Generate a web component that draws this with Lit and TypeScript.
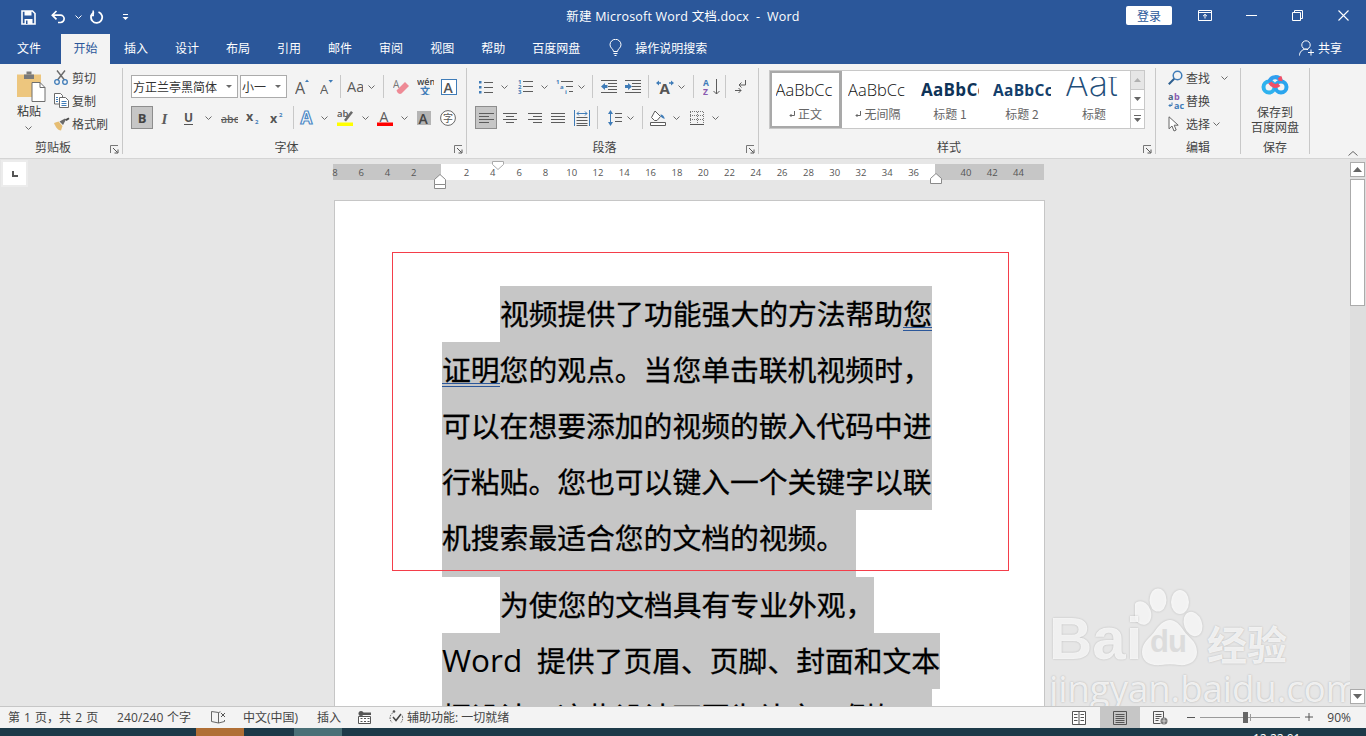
import { LitElement, html, svg, css } from "lit";
import { customElement } from "lit/decorators.js";

const G = "#5c5c5c";
const B = "#3f7cb8";
const P = "#8a5bb0";

const cell = (w: number, c: unknown) => html`<span class="c" style="width:${w}px">${c}</span>`;
const chev = (color = "#6a6a6a") => html`<svg width="7" height="4" viewBox="0 0 7 4"><path d="M.5.5l3 3 3-3" fill="none" stroke=${color}/></svg>`;
const sep = () => html`<span class="vsep"></span>`;

const lines = (rows: number[][], w: number, h: number, c = G) => html`<svg width=${w} height=${h} viewBox="0 0 ${w} ${h}">${rows.map(([a, b, y]) => svg`<path d="M${a} ${y + 0.5}H${b}" stroke=${c} fill="none"/>`)}</svg>`;

const icons = {
  save: html`<svg width="15" height="15" viewBox="0 0 15 15"><path d="M1 1h10.5L14 3.5V14H1z" fill="none" stroke="#fff" stroke-width="1.6"/><path d="M3.5 1h7v4.5h-7zM3.5 9h8v5h-8z" fill="#fff"/><path d="M5 10.5h1.5V14H5z" fill="#2b579a"/></svg>`,
  undo: html`<svg width="15" height="14" viewBox="0 0 15 14"><path d="M1.5 5.2H9.5a3.6 3.6 0 0 1 0 7.3H7" fill="none" stroke="#fff" stroke-width="1.7"/><path d="M5.5 1L1.3 5.2l4.2 4.2" fill="none" stroke="#fff" stroke-width="1.7"/></svg>`,
  redo: html`<svg width="14" height="14" viewBox="0 0 14 14"><path d="M8.5 2A5.6 5.6 0 1 1 4 2.3" fill="none" stroke="#fff" stroke-width="1.8"/><path d="M3.2 .5v5h-2.7" fill="none" stroke="#fff" stroke-width="1.5"/></svg>`,
  qat: html`<svg width="7" height="7" viewBox="0 0 7 7"><path d="M1 .5h5" stroke="#fff"/><path d="M.5 3h6L3.500 6z" fill="#fff"/></svg>`,
  ribbonDisp: html`<svg width="14" height="11" viewBox="0 0 14 11"><path d="M.5.5h13v10H.5zM.5 2.500h13" fill="none" stroke="#fff"/><path d="M7 8.500V4.500M5 6.200L7 4.300l2 1.900" fill="none" stroke="#fff"/></svg>`,
  min: html`<svg width="11" height="1" viewBox="0 0 11 1"><path d="M0 .5h11" stroke="#fff"/></svg>`,
  restore: html`<svg width="11" height="11" viewBox="0 0 11 11"><path d="M.5 2.500h8v8h-8zM2.500 2.500v-2h8v8h-2" fill="none" stroke="#fff"/></svg>`,
  close: html`<svg width="11" height="11" viewBox="0 0 11 11"><path d="M.5.5l10 10M10.500.5l-10 10" stroke="#fff" stroke-width="1.1"/></svg>`,
  bulb: html`<svg width="13" height="17" viewBox="0 0 13 17"><path d="M4.500 12.500C4.500 10 1 9 1 5.800a5.500 5.500 0 0 1 11 0C12 9 8.500 10 8.500 12.500z" fill="none" stroke="#fff"/><path d="M4.500 14.500h4M5.500 16.500h2" stroke="#fff"/></svg>`,
  person: html`<svg width="16" height="16" viewBox="0 0 16 16"><circle cx="7" cy="5" r="4.200" fill="none" stroke="#fff"/><path d="M.5 15.500c0-3.500 2.500-6 6-6.300 1 0 1.800.2 2.500.5" fill="none" stroke="#fff"/><path d="M12 9.500v6M9 12.500h6" stroke="#fff"/></svg>`,
  paste: html`<svg width="29" height="31" viewBox="0 0 29 31"><path d="M0 3.500h24V26H0z" fill="#edc67e"/><path d="M7 3.500h10V8H7z" fill="#7a7a7a"/><path d="M9.500.5h5v3h-5z" fill="#7a7a7a"/><path d="M15 11.500h8l5 5v14H15z" fill="#fff" stroke="#6e6e6e"/><path d="M23 11.500v5h5" fill="none" stroke="#6e6e6e"/></svg>`,
  scissors: html`<svg width="14" height="15" viewBox="0 0 14 15"><path d="M3 .5l7.500 9.500M11 .5L3.500 10" stroke="#6a6a6a" stroke-width="1.400" fill="none"/><circle cx="3" cy="12" r="2.300" fill="none" stroke="#3f7cb8" stroke-width="1.300"/><circle cx="11" cy="12" r="2.300" fill="none" stroke="#3f7cb8" stroke-width="1.300"/></svg>`,
  copy: html`<svg width="15" height="15" viewBox="0 0 15 15"><path d="M.5.5h6l2 2V11H.5z" fill="#fff" stroke="#6a6a6a"/><path d="M5.500 4.500h6l3 3v7h-9z" fill="#fff" stroke="#6a6a6a"/><path d="M2 4.500h2M2 6.500h2M2 8.500h2" stroke="#3f7cb8"/><path d="M7.500 8.500h5M7.500 10.500h5M7.500 12.500h5" stroke="#3f7cb8"/></svg>`,
  painter: html`<svg width="16" height="14" viewBox="0 0 16 14"><path d="M0 6l4.500-1.500 4 4.500L7 13.500C4 13.500 1.500 10 0 6z" fill="#e6bd72"/><path d="M5.500 4.500l5.500-3 1 1-3 5.500z" fill="#6a6a6a"/><path d="M11 2.500l3.500-2 1 1.500-3 2z" fill="#4a4a4a"/></svg>`,
  launcher: html`<svg width="9" height="9" viewBox="0 0 9 9"><path d="M.5 8V.5H8" fill="none" stroke="#777"/><path d="M3 3l4.500 4.500M8 4.500V8H4.500" fill="none" stroke="#555"/></svg>`,
  bullets: html`<svg width="14" height="14" viewBox="0 0 14 14"><path d="M0 1h2.500v2.500H0zM0 6h2.500v2.500H0zM0 11h2.500v2.500H0z" fill=${B}/><path d="M5 2.500h9M5 7.500h9M5 12.500h9" stroke=${G}/></svg>`,
  numbered: html`<svg width="15" height="15" viewBox="0 0 15 15"><text x="0" y="5" font-size="6" fill=${B} font-weight="700">1</text><text x="0" y="10" font-size="6" fill=${B} font-weight="700">2</text><text x="0" y="15" font-size="6" fill=${B} font-weight="700">3</text><path d="M5 2.500h10M5 7.500h10M5 12.500h10" stroke=${G}/></svg>`,
  multi: html`<svg width="17" height="15" viewBox="0 0 17 15"><text x="0" y="5" font-size="6" fill=${B} font-weight="700">1</text><text x="4" y="10" font-size="6" fill=${B} font-weight="700">a</text><text x="9" y="15" font-size="6" fill=${B} font-weight="700">i</text><path d="M5 2.500h12M10 7.500h7M13 12.500h4" stroke=${G}/></svg>`,
  outdent: html`<svg width="16" height="13" viewBox="0 0 16 13"><path d="M0 .5h16M7 3.500h9M7 6.500h9M7 9.500h9M0 12.500h16" stroke=${G}/><path d="M0 6.500l4-3.500v2h2.500v3H4v2z" fill=${B}/></svg>`,
  indent: html`<svg width="16" height="13" viewBox="0 0 16 13"><path d="M0 .5h16M7 3.500h9M7 6.500h9M7 9.500h9M0 12.500h16" stroke=${G}/><path d="M7 6.500L3 3v2H0v3h3v2z" fill=${B}/></svg>`,
  layout: html`<svg width="18" height="14" viewBox="0 0 18 14"><text x="3.500" y="14" font-size="15" font-weight="700" fill="#555">A</text><path d="M0 3l3-2.500v1.800h2v1.400H3v1.800zM18 3l-3-2.500v1.800h-2v1.400h2v1.800z" fill=${B}/></svg>`,
  sort: html`<svg width="18" height="16" viewBox="0 0 18 16"><text x="0" y="7" font-size="8.500" font-weight="700" fill=${B}>A</text><text x="0" y="16" font-size="8.500" font-weight="700" fill=${P}>Z</text><path d="M13.500 0v15M10.500 12l3 3 3-3" fill="none" stroke=${G}/></svg>`,
  returnIc: html`<svg width="11" height="13" viewBox="0 0 11 13"><path d="M10.500 0v5H4M6.500 2.500L4 5l2.500 2.500" fill="none" stroke=${G}/><path d="M0 10.500h6M3.500 8L6 10.500 3.500 13" fill="none" stroke=${G}/></svg>`,
  alignL: lines([[0,15,0],[0,10,3],[0,15,6],[0,10,9]], 15, 10),
  alignC: lines([[0,14,0],[3,11,3],[0,14,6],[3,11,9]], 14, 10),
  alignR: lines([[0,14,0],[5,14,3],[0,14,6],[5,14,9]], 14, 10),
  alignJ: lines([[0,14,0],[0,14,3],[0,14,6],[0,14,9]], 14, 10),
  distrib: html`<svg width="16" height="16" viewBox="0 0 16 16"><path d="M.5 0v16M15.500 0v16" stroke=${B}/><path d="M3 3.500h10M5 1.500L3 3.500l2 2M11 1.500l2 2-2 2" fill="none" stroke=${B}/><path d="M2.500 7.500h11M2.500 10.500h11M2.500 13.500h11M2.500 15.500h11" stroke=${G}/></svg>`,
  spacing: html`<svg width="14" height="16" viewBox="0 0 14 16"><path d="M2.500 2v12" stroke=${B}/><path d="M0 4l2.500-4L5 4zM0 12l2.500 4L5 12z" fill=${B}/><path d="M7 3.500h7M7 7.500h7M7 11.500h7" stroke=${G}/></svg>`,
  shading: html`<svg width="16" height="16" viewBox="0 0 16 16"><path d="M5 1l5.500 5.500L7 10.500H4.500L1.500 7.500z" fill="#fff" stroke=${G}/><path d="M10.500 4.500c2 0 4 1.800 4.200 4.500-1.500-.5-3-1.300-4-2.500z" fill=${B}/><path d="M.5 12.500h15v3H.5z" fill="#fff" stroke=${G}/></svg>`,
  border: html`<svg width="14" height="14" viewBox="0 0 14 14"><path d="M0 .5h14M0 4.500h14M0 8.500h14M.5 1v11M7.500 1v11M13.500 1v11" stroke="#777" stroke-dasharray="1 1" fill="none"/><path d="M0 13.500h14" stroke="#555"/></svg>`,
  find: html`<svg width="15" height="15" viewBox="0 0 15 15"><circle cx="9.500" cy="5.500" r="4.300" fill="none" stroke=${B} stroke-width="1.500"/><path d="M6.200 8.800L.8 14.200" stroke="#2e5f90" stroke-width="2"/></svg>`,
  replace: html`<svg width="17" height="16" viewBox="0 0 17 16"><text x="0" y="7" font-size="9" font-weight="700" fill="#46617d">a</text><text x="6" y="7" font-size="9" font-weight="700" fill=${P}>b</text><text x="6" y="16" font-size="9" font-weight="700" fill=${B}>ac</text><path d="M4 9.500v3H1M2.500 11L1 12.500 2.500 14" fill="none" stroke=${B}/></svg>`,
  select: html`<svg width="12" height="16" viewBox="0 0 12 16"><path d="M1 .8v12l3-2.800 2 5 2.200-1-2-4.800h4z" fill="#fff" stroke="#666"/></svg>`,
  baidupan: html`<svg width="28" height="24" viewBox="0 0 28 24"><circle cx="8" cy="15" r="5.500" fill="none" stroke="#2eb2ee" stroke-width="4"/><circle cx="20" cy="15" r="5.500" fill="none" stroke="#2aa5ee" stroke-width="4"/><path d="M8.500 10A6 6 0 0 1 20 9" fill="none" stroke="#2f9ff0" stroke-width="4"/><path d="M9 10.500c2 3 6 5 9 2" fill="none" stroke="#f05068" stroke-width="4"/><path d="M19.500 9a5.800 5.800 0 0 0-1-4" fill="none" stroke="#f05068" stroke-width="4"/></svg>`,
  retMark: html`<svg width="6" height="6" viewBox="0 0 6 6"><path d="M5.500 0v4.500H1M2.500 3L1 4.500 2.500 6" fill="none" stroke="#666"/></svg>`,
  book: html`<svg width="15" height="13" viewBox="0 0 15 13"><path d="M7.500 1.500L.5.500v10l7 1.500zM7.500 1.500l2-.7M7.500 12l6-1.500V9" fill="none" stroke="#666"/><path d="M10 2l4 4M14 2l-4 4" stroke="#555"/></svg>`,
  macro: html`<svg width="13" height="13" viewBox="0 0 13 13"><circle cx="3" cy="2.500" r="2.500" fill="#555"/><path d="M5 1.500h8V4H5z" fill="#555"/><path d="M.5 5.500h12v7H.5z" fill="#fff" stroke="#555"/><path d="M2.500 7.500h2M6 7.500h2M9.500 7.500h2M2.500 10.500h2M6 10.500h2M9.500 10.500h2" stroke="#555"/></svg>`,
  access: html`<svg width="15" height="15" viewBox="0 0 15 15"><path d="M3.500 3A6.300 6.300 0 0 0 3 12.500M12 12.500A6.300 6.300 0 0 0 12.800 5" fill="none" stroke="#555" stroke-dasharray="1.500 1"/><circle cx="5" cy="1.500" r="1.300" fill="#555"/><path d="M4 7l3 3.500L12 4" fill="none" stroke="#444" stroke-width="1.500"/></svg>`,
  readView: html`<svg width="14" height="14" viewBox="0 0 14 14"><path d="M.5.5h13v13H.5zM7 .5v13" fill="#fff" stroke="#555"/><path d="M2 3.500h3.500M2 6.500h3.500M2 9.500h3.500M8.500 3.500H12M8.500 6.500H12M8.500 9.500H12" stroke="#555"/></svg>`,
  printView: html`<svg width="14" height="14" viewBox="0 0 14 14"><path d="M.5.500h13v13H.5z" fill="none" stroke="#555"/><path d="M2.500 3.500h9M2.500 5.500h9M2.500 7.500h9M2.500 9.500h9M2.500 11.500h9" stroke="#555"/></svg>`,
  webView: html`<svg width="15" height="14" viewBox="0 0 15 14"><path d="M.5.500h10v8M.5.500v12h7" fill="none" stroke="#555"/><path d="M2.500 3.500h6M2.500 5.500h6M2.500 7.500h4M2.500 9.500h3" stroke="#555"/><circle cx="11" cy="10" r="3.500" fill="#777"/><path d="M8.500 10h5M11 7v6" stroke="#fff" stroke-width=".6"/></svg>`,
};

const T = (t: string, x: number, y: number, fs: number, o: Record<string, string> = {}) => svg`<text x=${x} y=${y} font-size=${fs} fill=${o.fill ?? "#5a5a5a"} font-weight=${o.w ?? "400"} font-style=${o.s ?? "normal"}>${t}</text>`;

const txt = {
  growA: html`<svg width="15" height="15" viewBox="0 0 15 15">${T("A", 0, 15, 16)}<path d="M10 3l2-2.500L14 3z" fill=${B}/></svg>`,
  shrinkA: html`<svg width="13" height="14" viewBox="0 0 13 14">${T("A", 0, 14, 13)}<path d="M8.500 0h4.500L10.700 2.800z" fill=${B}/></svg>`,
  aa: html`<svg width="16" height="13" viewBox="0 0 16 13">${T("Aa", 0, 12, 14.500)}</svg>`,
  eraser: html`<svg width="16" height="16" viewBox="0 0 16 16">${T("A", 0, 9, 10, { fill: "#777" })}<path d="M12 3l4 4-7.500 7.500c-1.500.8-3 .3-4-1l-1-2z" fill="#ee8a95"/></svg>`,
  wen: html`<svg width="17" height="17" viewBox="0 0 17 17">${T("wén", 0, 7, 9, { fill: "#444", w: "600" })}<text x="3" y="17" font-size="10" fill=${B} font-weight="700">文</text></svg>`,
  abox: html`<svg width="16" height="16" viewBox="0 0 16 16"><rect x=".5" y=".5" width="15" height="15" fill="#fff" stroke=${B}/>${T("A", 2.600, 13.500, 14, { fill: "#555", w: "600" })}</svg>`,
  I: html`<svg width="10" height="14" viewBox="0 0 10 14"><text class="serif" x="1.500" y="12.500" font-size="15" fill="#5c5c5c" font-style="italic" font-weight="700">I</text></svg>`,
  U: html`<svg width="10" height="14" viewBox="0 0 10 14">${T("U", 0, 11, 12, { w: "700", fill: "#555" })}<path d="M0 13.500h9" stroke="#555"/></svg>`,
  abc: html`<svg width="17" height="12" viewBox="0 0 17 12">${T("abc", 0, 11, 10.500, { w: "600", fill: "#666" })}<path d="M0 7.500h17" stroke="#555"/></svg>`,
  x2: html`<svg width="15" height="12" viewBox="0 0 15 12">${T("x", 0, 9, 12.500, { w: "700", fill: "#555" })}${T("2", 9, 12, 6, { fill: B, w: "700" })}</svg>`,
  xs: html`<svg width="15" height="12" viewBox="0 0 15 12">${T("x", 0, 11, 12.500, { w: "700", fill: "#555" })}${T("2", 9, 5, 6, { fill: B, w: "700" })}</svg>`,
  glow: html`<svg width="18" height="17" viewBox="0 0 18 17"><text x="1.500" y="15" font-size="17" font-weight="700" fill="#fff" stroke="#4f8ac6" stroke-width="1.200">A</text></svg>`,
  ab: html`<svg width="17" height="17" viewBox="0 0 17 17">${T("ab", 0, 8, 9.500, { w: "600", fill: "#555" })}<path d="M7 11l7-9 2 1.500-7 9z" fill="#6a6a6a"/><path d="M0 13.500h16V17H0z" fill="#ff0"/></svg>`,
  aRed: html`<svg width="16" height="17" viewBox="0 0 16 17">${T("A", 2.500, 13, 14, { w: "400" })}<path d="M0 13.500h16V17H0z" fill="#f00"/></svg>`,
  aGray: html`<svg width="14" height="14" viewBox="0 0 14 14"><rect width="14" height="14" fill="#b4b4b4"/>${T("A", 1.500, 12.500, 14, { fill: "#444", w: "600" })}</svg>`,
  zi: html`<svg width="16" height="16" viewBox="0 0 16 16"><circle cx="8" cy="8" r="7.400" fill="#fff" stroke="#666"/><text x="3" y="12" font-size="10" fill="#555">字</text></svg>`,
};

const paraRow1 = [[21, icons.bullets],[16, chev()],[26, icons.numbered],[13, chev()],[26, icons.multi],[8, chev()],[14, sep()],[20, icons.outdent],[28, icons.indent],[3, sep()],[2, ""],[26, icons.layout],[6, chev()],[18, sep()],[20, icons.sort],[6, sep()],[24, icons.returnIc]] as [number, unknown][];
const paraRow2 = [[26, icons.alignC],[23, icons.alignR],[24, icons.alignJ],[24, icons.distrib],[6, sep()],[4, ""],[22, icons.spacing],[8, chev()],[16, sep()],[16, icons.shading],[20, chev()],[22, icons.border],[14, chev()]] as [number, unknown][];
const fontRow1 = [[26, txt.growA],[22, txt.shrinkA],[7, sep()],[21, txt.aa],[13, chev()],[11, sep()],[24, txt.eraser],[24, txt.wen],[24, txt.abox]] as [number, unknown][];
const fontRow2 = [[24, txt.I],[24, txt.U],[15, chev()],[26, txt.abc],[23, txt.x2],[24, txt.xs],[8, sep()],[22, txt.glow],[11, chev()],[30, txt.ab],[10, chev()],[30, txt.aRed],[8, chev()],[32, txt.aGray],[16, txt.zi]] as [number, unknown][];

const styles = [
  { s: "AaBbCc", l: "正文", mark: true, cls: "s-normal", picked: true },
  { s: "AaBbCc", l: "无间隔", mark: true, cls: "s-normal" },
  { s: "AaBbCc", l: "标题 1", cls: "s-h1" },
  { s: "AaBbCc", l: "标题 2", cls: "s-h2" },
  { s: "Aat", l: "标题", cls: "s-title" },
];

const rulerLeft = [8, 6, 4, 2];
const rulerRight = Array.from({ length: 18 }, (_, i) => (i + 1) * 2);
const rulerEnd = [40, 42, 44];
const UI = css`"Open Sans", "Noto Sans CJK SC", sans-serif`;

@customElement("app-root")
export class AppRoot extends LitElement {
  static styles = css`
    :host { display: block; width: 1366px; height: 736px; overflow: hidden; position: relative; background: #e6e6e6; font-family: "Noto Sans CJK SC", sans-serif; font-size: 12px; color: #444; }
    svg { display: block; flex: none; }
    svg text { font-family: ${UI}; }
    svg text.serif { font-family: "Liberation Serif", serif; }
    .app { display: flex; flex-direction: column; height: 736px; }

    .titlebar { height: 34px; background: #2b579a; display: grid; grid-template-columns: 1fr auto 1fr; align-items: center; color: #fff; }
    .qat { display: flex; align-items: center; }
    .qat .c { height: 20px; }
    .title { font-family: ${UI}; font-size: 12.5px; letter-spacing: .2px; white-space: pre; margin-top: -4px; }
    .winctl { display: flex; justify-content: flex-end; align-items: center; }
    .login { width: 46px; height: 19px; background: #fff; color: #2b579a; border-radius: 2px; display: flex; align-items: center; justify-content: center; margin-right: 10px; margin-top: -3px; }
    .wb { width: 46px; height: 30px; display: flex; align-items: center; justify-content: center; margin-top: -3px; }

    .tabs { height: 30px; background: #2b579a; display: flex; color: #fff; padding-left: 17px; box-sizing: border-box; }
    .tab { line-height: 27px; margin-right: 27px; white-space: nowrap; }
    .tab.first { margin-right: 20px; }
    .tab.active { background: #f3f3f3; color: #2b579a; padding: 0 12.5px; margin-right: 14px; margin-top: 0; }
    .tab.pan { margin-right: 29px; }
    .tellme { display: flex; align-items: center; gap: 13px; height: 27px; }
    .share { margin-left: auto; margin-right: 24px; display: flex; align-items: center; gap: 3px; height: 27px; }

    .ribbon { height: 94px; background: #f3f3f3; display: flex; border-bottom: 1px solid #d4d4d4; box-sizing: content-box; }
    .group { margin-top: 4px; height: 86px; border-right: 1px solid #c8c8c8; display: flex; flex-direction: column; box-sizing: border-box; position: relative; flex: none; }
    .gbody { height: 70px; flex: none; box-sizing: border-box; }
    .gfoot { display: grid; grid-template-columns: 1fr 16px; height: 16px; align-items: center; text-align: center; }
    .gfoot.plain { grid-template-columns: 1fr; }
    .gfoot .launch { justify-self: center; margin-top: 4px; }
    .gfoot span { color: #444; line-height: 18px; }

    .c { display: inline-flex; align-items: center; justify-content: center; height: 23px; flex: none; }
    .vsep { width: 1px; height: 23px; background: #c8c8c8; display: block; }
    .row { display: flex; align-items: center; height: 23px; }

    .clip { width: 123px; }
    .clipbody { display: flex; height: 70px; }
    .pastecol { width: 58px; padding-left: 17px; padding-top: 3px; box-sizing: border-box; display: flex; flex-direction: column; align-items: flex-start; }
    .pastecol .pl { width: 24px; line-height: 16px; margin-top: 1px; color: #333; white-space: nowrap; }
    .pastecol .ch { margin: 7px 0 0 8px; }
    .cliplist { display: flex; flex-direction: column; margin-top: -2px; margin-left: -4px; }
    .cl { display: flex; height: 23px; align-items: center; }
    .cl .ci { width: 18px; display: flex; justify-content: flex-start; }

    .font { width: 344px; }
    .fbody { padding: 7px 0 0 8px; display: flex; flex-direction: column; gap: 8px; }
    .combo { border: 1px solid #ababab; background: #fff; height: 23px; box-sizing: border-box; display: flex; align-items: center; padding: 0 4px 0 1px; color: #333; flex: none; margin-right: 2px; }
    .combo .v { flex: 1; white-space: nowrap; }
    .combo .ar { width: 0; height: 0; border: 3px solid transparent; border-top: 3.500px solid #6a6a6a; border-bottom: 0; margin-right: 1px; }
    .cb-font { width: 107px; }
    .cb-size { width: 47px; }
    .press { width: 22px; height: 23px; box-sizing: border-box; background: #c6c6c6; border: 1px solid #8d8d8d; display: flex; align-items: center; justify-content: center; flex: none; }
    .press b { font: 700 13px "Open Sans", sans-serif; color: #444; }

    .para { width: 292px; }

    .stylesg { width: 397px; }
    .gallery { display: flex; margin: 2px 0 0 10px; height: 59px; width: 377px; }
    .gitems { display: flex; width: 361px; height: 59px; box-sizing: border-box; border: 1px solid #c8c8c8; border-right: 0; background: #fff; overflow: hidden; }
    .si { width: 72px; height: 57px; flex: none; box-sizing: border-box; display: flex; flex-direction: column; align-items: center; overflow: hidden; padding-top: 6px; }
    .si.picked { margin: -1px 0 -1px -1px; height: 59px; width: 73px; border: 3px solid #a9a9a9; box-shadow: inset 0 0 0 1px #fff; padding-top: 4px; }
    .sample { height: 26px; line-height: 26px; width: 60px; overflow: hidden; white-space: nowrap; font-family: "Open Sans", sans-serif; color: #000; }
    .s-normal { font-size: 16.500px; font-weight: 300; color: #111; }
    .s-h1 { font-size: 17px; font-weight: 700; color: #0e3358; width: 58px; letter-spacing: .3px; }
    .s-h2 { font-size: 15.500px; font-weight: 700; color: #143f6c; width: 58px; letter-spacing: .3px; }
    .s-title { font: 200 36px/13px "Inter", sans-serif; color: #1f4e79; width: 58px; }
    .sl { color: #666; display: flex; align-items: center; gap: 3px; line-height: 16px; margin-top: 3px; white-space: nowrap; }
    .gbtn { display: flex; flex-direction: column; width: 15px; height: 59px; flex: none; }
    .gbtn span { flex: 1; box-sizing: border-box; background: #fff; border: 1px solid #c8c8c8; border-top: 0; display: flex; align-items: center; justify-content: center; }
    .gbtn span:first-child { background: #e6e6e6; border-top: 1px solid #c8c8c8; }

    .edit { width: 85px; }
    .elist { display: flex; flex-direction: column; }
    .elist .ei:first-child { margin-top: -2px; }
    .ei { display: flex; align-items: center; height: 23px; padding-left: 12px; white-space: nowrap; }
    .ei .ii { width: 18px; display: flex; justify-content: flex-start; }
    .ei .ch { margin-left: 11px; }
    .ei .ch2 { margin-left: 3px; }

    .saveg { width: 69px; }
    .savebody { display: flex; flex-direction: column; align-items: center; padding-top: 4px; line-height: 15px; color: #444; }
    .savebody .tx { text-align: center; margin-top: 8px; white-space: nowrap; }
    .collapse { flex: 1; display: flex; align-items: flex-end; justify-content: flex-end; padding: 0 8px 2px 0; }

    .main { flex: 1; display: flex; min-height: 0; background: #e6e6e6; }
    .docview { flex: 1; min-width: 0; display: flex; flex-direction: column; overflow: hidden; position: relative; }
    .rulerrow { flex: none; height: 41px; display: flex; align-items: flex-start; }
    .corner { width: 23px; height: 23px; margin: 3px 0 0 3px; background: #fff; box-shadow: 0 0 0 2px #ececec; flex: none; display: flex; align-items: center; justify-content: center; }
    .ruler { position: relative; margin: 5px 0 0 307px; width: 711px; height: 16px; background: #c6c6c6; }
    .rwhite { position: absolute; left: 108px; top: 0; width: 494px; height: 16px; background: #fff; }
    .rn { position: absolute; top: 0; width: 16px; margin-left: -8px; text-align: center; font: 9.500px/17px "Open Sans", sans-serif; color: #555; }
    .mk { position: absolute; display: block; }
    .mk-hang { left: 101px; top: 10px; }
    .mk-first { left: 159px; top: -3px; }
    .mk-right { left: 597px; top: 9px; }

    .page { flex: none; margin-left: 334px; width: 711px; box-sizing: border-box; background: #fff; border: 1px solid #c6c6c6; border-bottom: 0; padding: 85px 0 0 107px; height: 520px; font-size: 28.800px; color: #000; position: relative; -webkit-text-stroke: .3px #000; }
    .ln { display: block; height: 56px; line-height: 54px; white-space: nowrap; }
    .ln.ind { padding-left: 58px; }
    .ln.end { height: 67px; }
    .sel { display: inline-block; background: #c6c6c6; height: 100%; vertical-align: top; position: relative; }
    .sel.pm { padding-right: 11px; }
    .dbl { position: relative; }
    .dbl::after { content: ""; position: absolute; left: 0; right: 0; bottom: 2px; height: 4px; box-sizing: border-box; border-top: 1px solid #2b579a; border-bottom: 1px solid #2b579a; }
    .wd { font-family: "Open Sans", sans-serif; display: inline-block; width: 95px; font-size: 31.500px; line-height: 54px; vertical-align: top; -webkit-text-stroke: 0; }
    .redbox { position: absolute; left: 57px; top: 51px; width: 617px; height: 319px; box-sizing: border-box; border: 1px solid #f43e4a; pointer-events: none; }

    .watermark { position: absolute; left: 1047px; top: 428px; width: 250px; height: 120px; color: rgba(255, 255, 255, .8); pointer-events: none; }
    .wm-paw { position: absolute; left: 88px; top: 0; filter: drop-shadow(0 0 1px rgba(0, 0, 0, .22)); }
    .wm-bai { position: absolute; left: 2px; top: 21px; font: 700 60px/62px "Liberation Sans", sans-serif; text-shadow: 0 0 2px rgba(0, 0, 0, .22); }
    .wm-du { position: absolute; left: 103px; top: 37px; font: 700 31px/36px "Liberation Sans", sans-serif; color: #dcdcdc; letter-spacing: -1px; }
    .wm-jy { position: absolute; left: 160px; top: 31px; font: 700 40px/50px "Noto Sans CJK SC", sans-serif; text-shadow: 0 0 2px rgba(0, 0, 0, .22); white-space: nowrap; }
    .wm-url { position: absolute; left: 2px; top: 81px; font: 400 36.500px/40px "Open Sans", sans-serif; text-shadow: 0 0 2px rgba(0, 0, 0, .25); white-space: nowrap; }

    .vscroll { width: 16px; flex: none; display: flex; flex-direction: column; background: #dedede; padding-top: 3px; box-sizing: border-box; }
    .sb { width: 15px; height: 15px; box-sizing: border-box; border: 1px solid #ababab; background: #fff; display: flex; align-items: center; justify-content: center; flex: none; }
    .thumb { width: 15px; height: 127px; box-sizing: border-box; margin-top: 2px; border: 1px solid #ababab; background: #fff; flex: none; }
    .track { flex: 1; }
    .vscroll .sb:last-child { margin-bottom: 2px; }

    .status { height: 22px; background: #f3f3f3; border-top: 1px solid #c6c6c6; box-sizing: border-box; display: flex; align-items: center; flex: none; color: #444; white-space: nowrap; padding-left: 8px; font-family: ${UI}; }
    .st { display: flex; align-items: center; height: 21px; flex: none; line-height: 19px; padding-bottom: 1px; box-sizing: border-box; }
    .pg { width: 109px; word-spacing: 1px; white-space: pre; }
    .cnt { width: 94px; white-space: pre; letter-spacing: .15px; }
    .bk { width: 32px; }
    .zh { width: 74px; }
    .ins { width: 41px; }
    .mc { width: 31px; }
    .ac { width: 18px; }
    .vw { height: 21px; display: flex; align-items: center; justify-content: center; flex: none; }
    .vw.rd { margin-left: auto; width: 16px; }
    .vw.on { background: #c6c6c6; margin-left: 13px; width: 40px; }
    .vw.wb2 { margin-left: 13px; width: 15px; }
    .zm-minus { margin-left: 19px; }
    .zm-pct { margin: 0 15px 0 14px; }
    .zoombar { width: 100px; height: 1px; background: #9a9a9a; position: relative; flex: none; margin: 0 5px; }
    .zoombar::before { content: ""; position: absolute; left: 50px; top: -3px; width: 1px; height: 7px; background: #9a9a9a; }
    .zoombar i { position: absolute; left: 43px; top: -5px; width: 5px; height: 11px; background: #666; }

    .task { height: 8px; flex: none; background: #1d3a49; display: flex; overflow: hidden; }
    .task .o { width: 48px; margin-left: 196px; background: #b06f35; flex: none; }
    .task .g { width: 48px; margin-left: 50px; background: #4a7077; flex: none; }
    .task .clock { margin-left: 911px; color: #fff; font: 12px/13px "Open Sans", sans-serif; padding-top: 4px; flex: none; }
  `;

  private doc() {
    return html`
      <span class="ln ind"><span class="sel">视频提供了功能强大的方法帮助<span class="dbl">您</span></span></span>
      <span class="ln"><span class="sel"><span class="dbl">证明</span>您的观点。当您单击联机视频时，</span></span>
      <span class="ln"><span class="sel">可以在想要添加的视频的嵌入代码中进</span></span>
      <span class="ln"><span class="sel">行粘贴。您也可以键入一个关键字以联</span></span>
      <span class="ln end"><span class="sel pm">机搜索最适合您的文档的视频。</span></span>
      <span class="ln ind"><span class="sel">为使您的文档具有专业外观，</span></span>
      <span class="ln"><span class="sel"><span class="wd">Word</span>提供了页眉、页脚、封面和文本</span></span>
      <span class="ln"><span class="sel">框设计，这些设计可互为补充。例如，</span></span>
      <div class="redbox"></div>
    `;
  }

  render() {
    return html`
      <div class="app">
        <div class="titlebar">
          <div class="qat">
            ${cell(21, "")}${cell(15, icons.save)}${cell(15, "")}${cell(15, icons.undo)}${cell(9, "")}${cell(7, chev("#fff"))}${cell(8, "")}${cell(14, icons.redo)}${cell(18, "")}${cell(7, icons.qat)}
          </div>
          <div class="title">新建 Microsoft Word 文档.docx  -  Word</div>
          <div class="winctl">
            <div class="login">登录</div>
            <div class="wb">${icons.ribbonDisp}</div>
            <div class="wb">${icons.min}</div>
            <div class="wb">${icons.restore}</div>
            <div class="wb">${icons.close}</div>
          </div>
        </div>

        <div class="tabs">
          <div class="tab first">文件</div>
          <div class="tab active">开始</div>
          ${["插入", "设计", "布局", "引用", "邮件", "审阅", "视图", "帮助"].map((t) => html`<div class="tab">${t}</div>`)}
          <div class="tab pan">百度网盘</div>
          <div class="tellme">${icons.bulb}<span>操作说明搜索</span></div>
          <div class="share">${icons.person}<span>共享</span></div>
        </div>

        <div class="ribbon">
          <section class="group clip">
            <div class="clipbody">
              <div class="pastecol">
                ${icons.paste}
                <span class="pl">粘贴</span>
                <span class="ch">${chev()}</span>
              </div>
              <div class="cliplist">
                <div class="cl"><span class="ci">${icons.scissors}</span>剪切</div>
                <div class="cl"><span class="ci">${icons.copy}</span>复制</div>
                <div class="cl"><span class="ci">${icons.painter}</span>格式刷</div>
              </div>
            </div>
            <div class="gfoot"><span>剪贴板</span><i class="launch">${icons.launcher}</i></div>
          </section>

          <section class="group font">
            <div class="gbody fbody">
              <div class="row">
                <div class="combo cb-font"><span class="v">方正兰亭黑简体</span><i class="ar"></i></div>
                <div class="combo cb-size"><span class="v">小一</span><i class="ar"></i></div>
                ${fontRow1.map(([w, c]) => cell(w, c))}
              </div>
              <div class="row">
                <div class="press"><b>B</b></div>
                ${fontRow2.map(([w, c]) => cell(w, c))}
              </div>
            </div>
            <div class="gfoot"><span>字体</span><i class="launch">${icons.launcher}</i></div>
          </section>

          <section class="group para">
            <div class="gbody fbody">
              <div class="row">${paraRow1.map(([w, c]) => cell(w, c))}</div>
              <div class="row">
                <div class="press">${icons.alignL}</div>
                ${paraRow2.map(([w, c]) => cell(w, c))}
              </div>
            </div>
            <div class="gfoot"><span>段落</span><i class="launch">${icons.launcher}</i></div>
          </section>

          <section class="group stylesg">
            <div class="gbody">
              <div class="gallery">
                <div class="gitems">
                  ${styles.map((s) => html`
                    <div class="si ${s.picked ? "picked" : ""}">
                      <div class="sample ${s.cls}">${s.s}</div>
                      <div class="sl">${s.mark ? icons.retMark : ""}<span>${s.l}</span></div>
                    </div>`)}
                </div>
                <div class="gbtn">
                  <span><svg width="7" height="4" viewBox="0 0 7 4"><path d="M0 4L3.500 0 7 4z" fill="#b0b0b0"/></svg></span>
                  <span><svg width="7" height="4" viewBox="0 0 7 4"><path d="M0 0L3.500 4 7 0z" fill="#666"/></svg></span>
                  <span><svg width="7" height="7" viewBox="0 0 7 7"><path d="M0 .5h7" stroke="#666"/><path d="M0 3L3.500 7 7 3z" fill="#666"/></svg></span>
                </div>
              </div>
            </div>
            <div class="gfoot"><span>样式</span><i class="launch">${icons.launcher}</i></div>
          </section>

          <section class="group edit">
            <div class="gbody elist">
              <div class="ei"><span class="ii">${icons.find}</span>查找<span class="ch">${chev()}</span></div>
              <div class="ei"><span class="ii">${icons.replace}</span>替换</div>
              <div class="ei"><span class="ii">${icons.select}</span>选择<span class="ch2">${chev()}</span></div>
            </div>
            <div class="gfoot plain"><span>编辑</span></div>
          </section>

          <section class="group saveg">
            <div class="gbody savebody">
              ${icons.baidupan}
              <div class="tx">保存到<br />百度网盘</div>
            </div>
            <div class="gfoot plain"><span>保存</span></div>
          </section>

          <div class="collapse"><svg width="10" height="5" viewBox="0 0 10 5"><path d="M.5 4.500l4.500-4 4.500 4" fill="none" stroke="#666"/></svg></div>
        </div>

        <div class="main">
          <div class="docview">
            <div class="rulerrow">
              <div class="corner"><svg width="6" height="6" viewBox="0 0 6 6"><path d="M0 0h2v4h4v2H0z" fill="#555"/></svg></div>
              <div class="ruler">
                <div class="rwhite"></div>
                ${rulerLeft.map((n, i) => html`<span class="rn" style="left:${2 + i * 26.2}px">${n}</span>`)}
                ${rulerRight.map((n, i) => html`<span class="rn" style="left:${133.5 + i * 26.3}px">${n}</span>`)}
                ${rulerEnd.map((n, i) => html`<span class="rn" style="left:${633 + i * 26.2}px">${n}</span>`)}
                <svg class="mk mk-hang" width="12" height="15" viewBox="0 0 12 15"><path d="M.5 14.500v-4h11v4zM.5 10.500v-5L6 .5l5.500 5v5" fill="#fff" stroke="#8a8a8a"/></svg>
                <svg class="mk mk-first" width="12" height="9" viewBox="0 0 12 9"><path d="M.5.5h11v3L6 8.500.5 3.500z" fill="#fff" stroke="#aaa"/></svg>
                <svg class="mk mk-right" width="12" height="11" viewBox="0 0 12 11"><path d="M.5 10.500v-5L6 .5l5.500 5v5z" fill="#fff" stroke="#8a8a8a"/></svg>
              </div>
            </div>
            <div class="page">${this.doc()}</div>
            <div class="watermark">
              <svg class="wm-paw" width="80" height="82" viewBox="0 0 80 82" fill="rgba(255,255,255,.8)">
                <ellipse cx="23" cy="13" rx="8.500" ry="11.500"/>
                <ellipse cx="45" cy="15" rx="9" ry="12"/>
                <ellipse cx="7" cy="26" rx="9" ry="12" transform="rotate(-18 7 26)"/>
                <ellipse cx="58" cy="37" rx="9" ry="12.500" transform="rotate(-20 58 37)"/>
                <path d="M35 33c6 0 10 5 14 11 4 6 13 10 13 21 0 10-9 14-18 13-6-1-12-1-18 0C14 79 7 74 7 65c0-10 9-15 13-21 4-6 9-11 15-11z"/>
              </svg>
              <span class="wm-bai">Bai</span>
              <span class="wm-du">du</span>
              <span class="wm-jy">经验</span>
              <span class="wm-url">jingyan.baidu.com</span>
            </div>
          </div>
          <div class="vscroll">
            <div class="sb"><svg width="9" height="5" viewBox="0 0 9 5"><path d="M0 5L4.500 0 9 5z" fill="#666"/></svg></div>
            <div class="thumb"></div>
            <div class="track"></div>
            <div class="sb"><svg width="9" height="5" viewBox="0 0 9 5"><path d="M0 0L4.500 5 9 0z" fill="#666"/></svg></div>
          </div>
        </div>

        <div class="status">
          <span class="st pg">第 1 页，共 2 页</span>
          <span class="st cnt">240/240 个字</span>
          <span class="st bk">${icons.book}</span>
          <span class="st zh">中文(中国)</span>
          <span class="st ins">插入</span>
          <span class="st mc">${icons.macro}</span>
          <span class="st ac">${icons.access}</span>
          <span class="st">辅助功能: 一切就绪</span>
          <span class="vw rd">${icons.readView}</span>
          <span class="vw on">${icons.printView}</span>
          <span class="vw wb2">${icons.webView}</span>
          <span class="st zm-minus"><svg width="8" height="1"><path d="M0 .5h8" stroke="#555"/></svg></span>
          <span class="zoombar"><i></i></span>
          <span class="st"><svg width="8" height="8" viewBox="0 0 8 8"><path d="M0 4h8M4 0v8" stroke="#555"/></svg></span>
          <span class="st zm-pct">90%</span>
        </div>
        <div class="task"><span class="o"></span><span class="g"></span><span class="clock">12:22:01</span></div>
      </div>
    `;
  }
}
